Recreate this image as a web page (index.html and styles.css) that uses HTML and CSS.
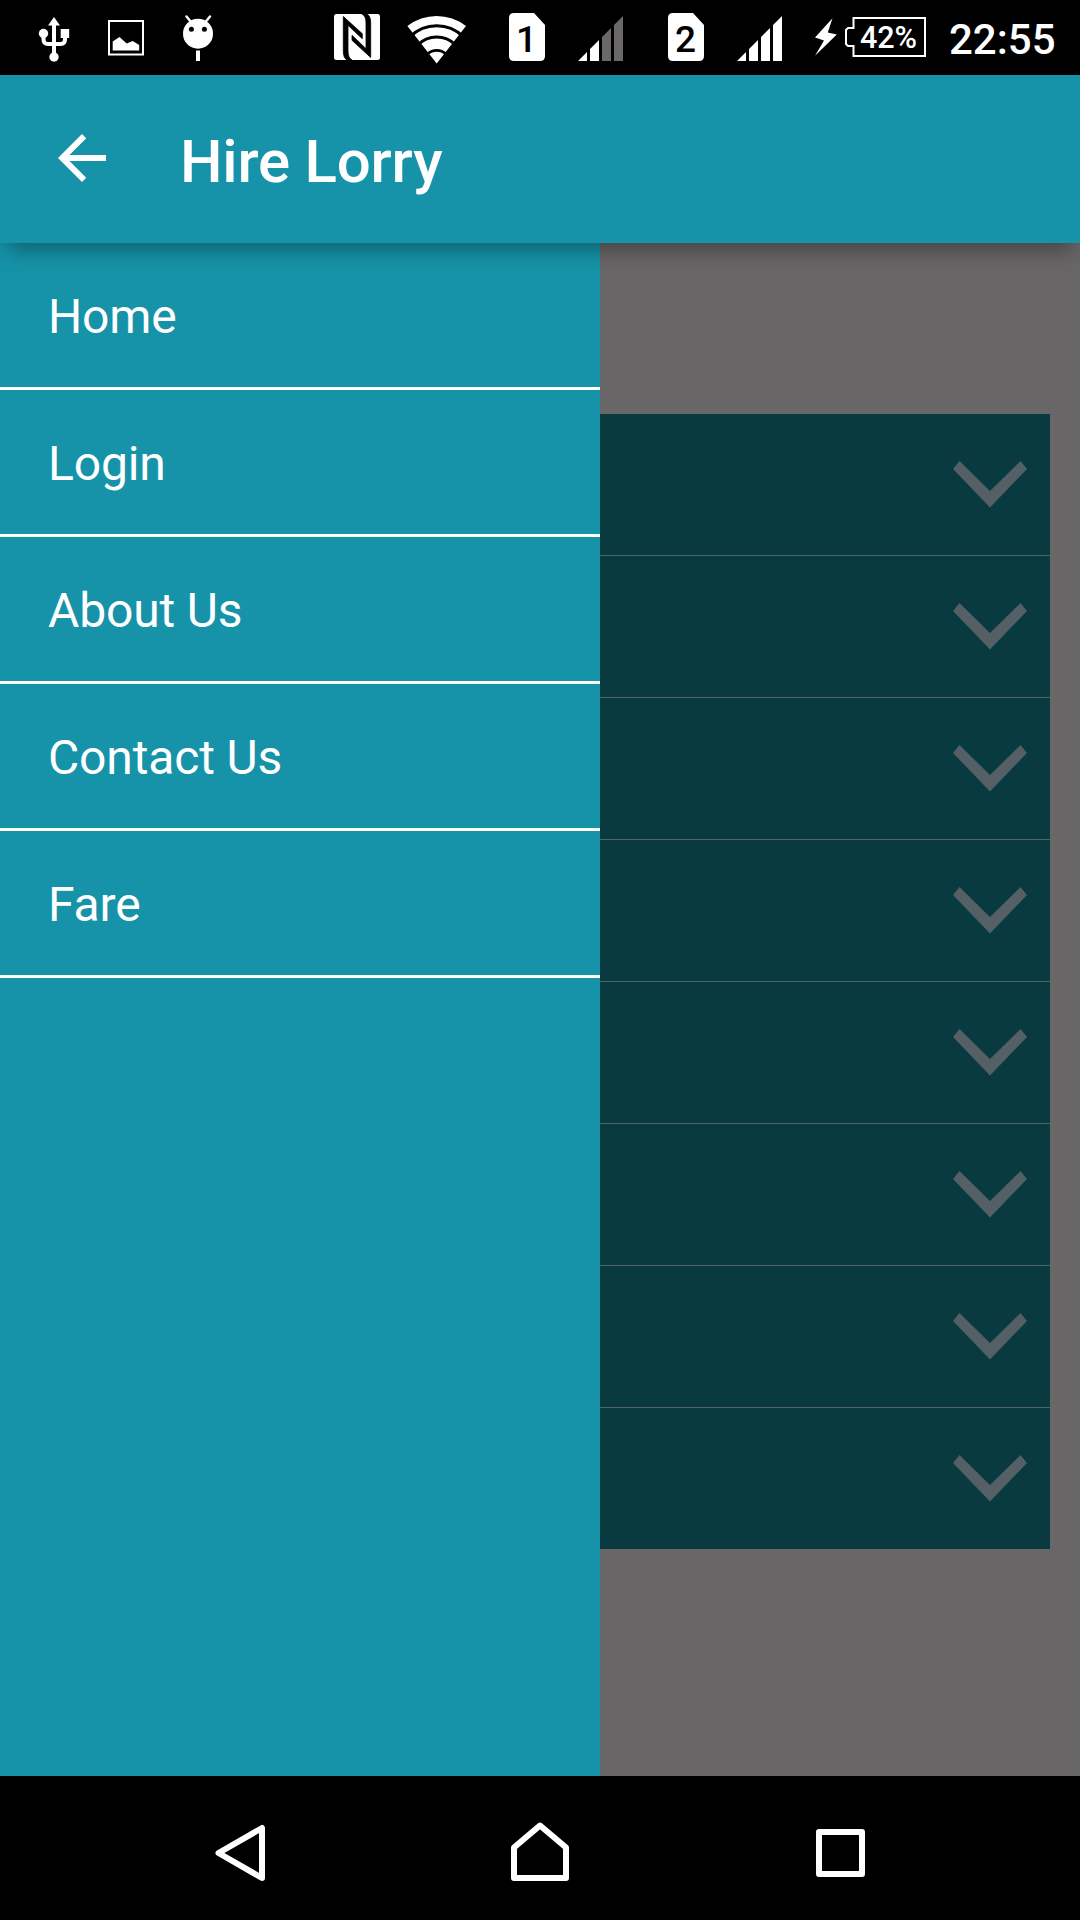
FILE: index.html
```html
<!DOCTYPE html>
<html lang="en">
<head>
  <meta charset="UTF-8" />
  <meta name="viewport" content="width=device-width, initial-scale=1.0"/>
  <title>Hire Lorry</title>
  <link rel="stylesheet" href="styles.css">
</head>
<body>
  <div class="status-bar">
    <div class="status-group notifications">
      <svg class="icon" width="32" height="75" viewBox="0 0 32 75">
        <path d="M16 17l6 8.500h-4V55h-4V25.500h-4z"/>
        <path d="M5.500 36v3.500q0 4.500 4.500 4.500h12.500q4.500 0 4.500-4.500V36" fill="none" stroke="#fff" stroke-width="4"/>
        <circle cx="5.500" cy="33.500" r="4.700"/>
        <rect x="22.700" y="29" width="8.500" height="9"/>
        <circle cx="16" cy="57" r="4.700"/>
      </svg>
      <svg class="icon" width="36" height="75" viewBox="0 0 36 75">
        <rect x="1" y="21" width="34" height="33.500" fill="none" stroke="#fff" stroke-width="2"/>
        <path d="M4.700 50.500v-9l6.800-4.500 7.200 6.500 6-2.500 6.500 4v5.500z"/>
      </svg>
      <svg class="icon" width="32" height="75" viewBox="0 0 32 75">
        <path d="M4.500 16.500l5 6M28 16.500l-5 6" fill="none" stroke="#fff" stroke-width="2.500" stroke-linecap="round"/>
        <circle cx="16" cy="33.700" r="15"/>
        <circle cx="9.400" cy="29.300" r="2.500" fill="#000"/>
        <circle cx="22.400" cy="29.300" r="2.500" fill="#000"/>
        <rect x="14" y="50.500" width="4" height="10.500"/>
      </svg>
    </div>
    <div class="status-group system">
      <svg class="icon nfc" width="46" height="75" viewBox="0 0 46 75">
        <rect x="0" y="14" width="46" height="46" rx="2.500"/>
        <path class="nfc-line" d="M9.300 16.500l19 17.200v5L14 25.300V51q0 7 4 9h-5q-3.700-2-3.700-9z"/>
        <path class="nfc-line" d="M36.700 57.500L18 40.300v-5l14 13.400V23q0-7-4-9h5q3.700 2 3.700 9z"/>
      </svg>
      <svg class="icon wifi" width="60" height="75" viewBox="0 0 60 75">
        <path d="M29.700 63.500L.4 26A47.500 47.500 0 0 1 59 26z"/>
        <path d="M3.400 36.500A37.500 37.500 0 0 1 56 36.500M11.300 44.500A26.300 26.300 0 0 1 48.100 44.500M20.600 54A13.300 13.300 0 0 1 38.800 54" fill="none" stroke="#000" stroke-width="2.800"/>
      </svg>
      <svg class="icon sim" width="36" height="75" viewBox="0 0 36 75">
        <path d="M5 13h20l11 12v31q0 5-5 5H5q-5 0-5-5V18q0-5 5-5z"/>
        <text x="17.500" y="51.700" class="sim-number">1</text>
      </svg>
      <svg class="icon signal" width="45" height="75" viewBox="0 0 45 75">
        <path d="M0 61l9-9v9zM12 61V49l9-9v21z"/>
        <path fill="#6b6869" d="M24 61V37l9-9v33zM36 61V25l9-9v45z"/>
      </svg>
      <svg class="icon sim" width="36" height="75" viewBox="0 0 36 75">
        <path d="M5 13h20l11 12v31q0 5-5 5H5q-5 0-5-5V18q0-5 5-5z"/>
        <text x="17.500" y="51.700" class="sim-number">2</text>
      </svg>
      <svg class="icon signal" width="45" height="75" viewBox="0 0 45 75">
        <path d="M0 61l9-9v9zM12 61V49l9-9v21zM24 61V37l9-9v33zM36 61V25l9-9v45z"/>
      </svg>
      <svg class="icon bolt" width="24" height="75" viewBox="0 0 24 75">
        <path d="M18.500 18.300L1 37.500l9 3L1 55.700l21.800-21.200-9-2z"/>
      </svg>
      <svg class="icon battery" width="81" height="75" viewBox="0 0 81 75">
        <path d="M8.500 18H80v38H8.500V46H3l-2-2V30l2-2h5.500z" fill="none" stroke="#fff" stroke-width="2"/>
        <text x="43.500" y="47.700" class="battery-level">42%</text>
      </svg>
      <span class="clock">22:55</span>
    </div>
  </div>

  <header class="app-bar">
    <svg class="back" width="72" height="72" viewBox="0 0 24 24">
      <path d="M20 11H7.830l5.590-5.590L12 4l-8 8 8 8 1.410-1.410L7.830 13H20v-2z"/>
    </svg>
    <h1>Hire Lorry</h1>
  </header>

  <main class="content">
    <nav class="drawer">
      <a class="drawer-item">Home</a>
      <a class="drawer-item">Login</a>
      <a class="drawer-item">About Us</a>
      <a class="drawer-item">Contact Us</a>
      <a class="drawer-item">Fare</a>
    </nav>
    <div class="panel">
      <div class="panel-row"><svg class="chevron" width="76" height="48" viewBox="0 0 76 48"><path d="M7.500 1L38 31 68.500 1 75 9 38 47.500 1 9z"/></svg></div>
      <div class="panel-row"><svg class="chevron" width="76" height="48" viewBox="0 0 76 48"><path d="M7.500 1L38 31 68.500 1 75 9 38 47.500 1 9z"/></svg></div>
      <div class="panel-row"><svg class="chevron" width="76" height="48" viewBox="0 0 76 48"><path d="M7.500 1L38 31 68.500 1 75 9 38 47.500 1 9z"/></svg></div>
      <div class="panel-row"><svg class="chevron" width="76" height="48" viewBox="0 0 76 48"><path d="M7.500 1L38 31 68.500 1 75 9 38 47.500 1 9z"/></svg></div>
      <div class="panel-row"><svg class="chevron" width="76" height="48" viewBox="0 0 76 48"><path d="M7.500 1L38 31 68.500 1 75 9 38 47.500 1 9z"/></svg></div>
      <div class="panel-row"><svg class="chevron" width="76" height="48" viewBox="0 0 76 48"><path d="M7.500 1L38 31 68.500 1 75 9 38 47.500 1 9z"/></svg></div>
      <div class="panel-row"><svg class="chevron" width="76" height="48" viewBox="0 0 76 48"><path d="M7.500 1L38 31 68.500 1 75 9 38 47.500 1 9z"/></svg></div>
      <div class="panel-row"><svg class="chevron" width="76" height="48" viewBox="0 0 76 48"><path d="M7.500 1L38 31 68.500 1 75 9 38 47.500 1 9z"/></svg></div>
    </div>
  </main>

  <footer class="nav-bar">
    <svg class="nav-icon" width="96" height="144" viewBox="0 0 96 144"><path d="M26.500 77L70 52v50z"/></svg>
    <svg class="nav-icon" width="96" height="144" viewBox="0 0 96 144"><path d="M22 71.500L48 49.500l26 22V102H22z"/></svg>
    <svg class="nav-icon" width="96" height="144" viewBox="0 0 96 144"><path d="M27 56h43v42H27z"/></svg>
  </footer>
</body>
</html>
```

FILE: styles.css
```css
* {
  box-sizing: border-box;
}

body {
  margin: 0;
  width: 1080px;
  height: 1920px;
  display: flex;
  flex-direction: column;
  overflow: hidden;
  font-family: Roboto, sans-serif;
  color: white;
  background: #686667;
}

svg {
  display: block;
  flex-shrink: 0;
}

/* status bar */
.status-bar {
  height: 75px;
  padding: 0 24px 0 38px;
  display: flex;
  justify-content: space-between;
  background: #000;
}

.status-group {
  display: flex;
}

.notifications {
  gap: 38px;
}

.icon {
  fill: white;
}

.nfc {
  margin-right: 27px;
}

.nfc-line {
  fill: black;
  stroke: black;
  stroke-width: 0.8;
}

.wifi {
  margin-right: 42px;
}

.sim {
  margin-right: 33px;
}

.signal {
  margin-right: 45px;
}

.signal + .bolt {
  margin-left: -13px;
}

.bolt {
  margin-right: 7px;
}

.sim-number {
  font-size: 37px;
  font-weight: 500;
  text-anchor: middle;
  fill: black;
}

.battery-level {
  font-size: 30.5px;
  font-weight: 500;
  text-anchor: middle;
}

.clock {
  width: 107px;
  margin-left: 23px;
  font-size: 42px;
  font-weight: 500;
  line-height: 80px;
  white-space: nowrap;
}

/* app bar */
.app-bar {
  height: 168px;
  padding: 0 46px;
  display: flex;
  align-items: center;
  background: #1693a8;
  box-shadow: 0 14px 20px -7px rgba(0, 0, 0, 0.34);
  clip-path: inset(0 0 -40px 0);
  z-index: 1;
}

.back {
  fill: white;
  margin-top: -2px;
}

.app-bar h1 {
  margin: 4px 0 0 62px;
  font-size: 60px;
  font-weight: 500;
  letter-spacing: -0.2px;
}

/* drawer and dimmed list behind it */
.content {
  height: 1533px;
  display: flex;
  align-items: flex-start;
}

.drawer {
  width: 600px;
  height: 100%;
  background: #1693a8;
}

.drawer-item {
  display: block;
  height: 147px;
  padding-left: 48px;
  border-bottom: 3px solid white;
  font-size: 48px;
  line-height: 147px;
  letter-spacing: -0.15px;
}

.panel {
  width: 450px;
  margin-top: 171px;
  background: #083a3f;
}

.panel-row {
  height: 142px;
  padding: 46px 22px 0 0;
  display: flex;
  justify-content: flex-end;
  border-bottom: 1px solid #506365;
}

.panel-row:last-child {
  height: 141px;
  border-bottom: none;
}

.chevron {
  fill: #555f66;
}

/* navigation bar */
.nav-bar {
  height: 144px;
  padding: 0 192px;
  display: flex;
  justify-content: space-between;
  background: #000;
}

.nav-icon {
  fill: none;
  stroke: white;
  stroke-width: 6;
  stroke-linejoin: round;
}
```
